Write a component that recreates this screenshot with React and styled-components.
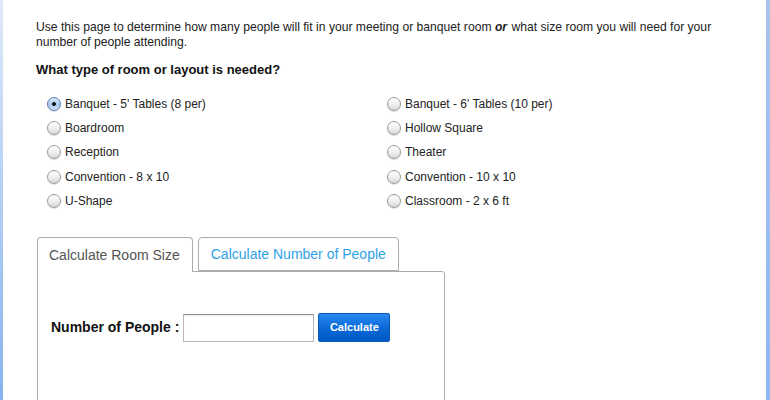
import React, { useState } from "react";
import styled, { createGlobalStyle } from "styled-components";

const Global = createGlobalStyle`
  html, body { margin: 0; padding: 0; background: #fff; }
  body { font-family: "Liberation Sans", Arial, Helvetica, sans-serif; color: #222; }
`;

const Frame = styled.div`
  display: flex;
  height: 400px;
  overflow: hidden;
`;

const Edge = styled.div`
  flex: 0 0 ${(p) => p.$w}px;
  background: linear-gradient(to bottom, ${(p) => p.$top}, ${(p) => p.$bottom});
`;

const Content = styled.div`
  flex: 1;
  padding: 20px 0 0 33px;
`;

const Intro = styled.p`
  margin: 0;
  width: 695px;
  font-size: 12.15px;
  line-height: 15px;
  color: #222;
  em { font-weight: bold; font-style: italic; padding-right: 1px; }
`;

const Heading = styled.h3`
  margin: 12px 0 0;
  font-size: 13px;
  line-height: 16px;
  font-weight: bold;
  color: #111;
`;

const Options = styled.div`
  display: grid;
  grid-template-columns: 340px 1fr;
  grid-auto-rows: 24.2px;
  margin: 14px 0 0 11px;
`;

const Option = styled.label`
  display: flex;
  align-items: center;
  gap: 4px;
  font-size: 12px;
  color: #222;
  cursor: pointer;
`;

const Radio = styled.input.attrs({ type: "radio" })`
  appearance: none;
  margin: 0;
  width: 14px;
  height: 14px;
  border-radius: 50%;
  border: 1px solid #9a9a9a;
  background: linear-gradient(to bottom, #ffffff 0%, #f0f0f0 50%, #d6d6d6 100%);
  box-shadow: 0 1px 1px rgba(0, 0, 0, 0.12);
  box-sizing: border-box;
  &:checked {
    border-color: #5a7fb0;
    background: radial-gradient(circle, #1a1a1a 0 1.6px, transparent 2.2px),
      linear-gradient(to bottom, #dbe9f8 0%, #a9c9ee 55%, #cfe3fa 100%);
  }
`;

const Tabs = styled.div`
  margin: 24px 0 0 1px;
  width: 408px;
`;

const TabRow = styled.div`
  display: flex;
  gap: 5px;
  align-items: flex-end;
  position: relative;
  z-index: 1;
`;

const Tab = styled.button`
  font-family: inherit;
  font-size: 14px;
  height: ${(p) => (p.$active ? 35 : 34)}px;
  padding: 0 12px 0 ${(p) => (p.$active ? 11 : 12)}px;
  margin-bottom: ${(p) => (p.$active ? -1 : 0)}px;
  border: 1px solid #acacac;
  border-bottom: ${(p) => (p.$active ? "none" : "1px solid #acacac")};
  border-radius: 4px 4px 0 0;
  background: #fff;
  color: ${(p) => (p.$active ? "#555" : "#2ea2e6")};
  cursor: pointer;
  display: flex;
  align-items: center;
`;

const Panel = styled.div`
  border: 1px solid #acacac;
  border-radius: 0 3px 0 0;
  height: 200px;
  padding: 41px 13px 0;
  box-sizing: border-box;
  display: flex;
  align-items: flex-start;
`;

const FormRow = styled.div`
  display: flex;
  align-items: center;
`;

const FieldLabel = styled.span`
  font-size: 14px;
  font-weight: bold;
  color: #111;
  margin-right: 4px;
`;

const TextInput = styled.input`
  width: 131px;
  height: 28px;
  box-sizing: border-box;
  border: 1px solid #b5b5b5;
  border-top-color: #8e8e8e;
  box-shadow: inset 0 1px 1px rgba(0, 0, 0, 0.08);
  margin: 1px 4px 0 0;
  padding: 2px 4px;
  font-family: inherit;
  font-size: 12px;
`;

const Button = styled.button`
  width: 72px;
  height: 29px;
  border: 1px solid #0a5bb8;
  border-radius: 2px;
  background: linear-gradient(to bottom, #2a8af0 0%, #0b6ad8 50%, #0058c4 100%);
  color: #fff;
  font-family: inherit;
  font-weight: bold;
  font-size: 11px;
  cursor: pointer;
`;

const left = [
  "Banquet - 5' Tables (8 per)",
  "Boardroom",
  "Reception",
  "Convention - 8 x 10",
  "U-Shape",
];
const right = [
  "Banquet - 6' Tables (10 per)",
  "Hollow Square",
  "Theater",
  "Convention - 10 x 10",
  "Classroom - 2 x 6 ft",
];

export default function App() {
  const [choice, setChoice] = useState(left[0]);
  const [tab, setTab] = useState(0);
  const items = [];
  left.forEach((l, i) => {
    items.push(l, right[i]);
  });
  return (
    <>
      <Global />
      <Frame>
        <Edge $w={3} $top="#dfe9f8" $bottom="#86b3ee" />
        <Content>
          <Intro>
            Use this page to determine how many people will fit in your meeting or banquet room{" "}
            <em>or</em> what size room you will need for your number of people attending.
          </Intro>
          <Heading>What type of room or layout is needed?</Heading>
          <Options>
            {items.map((label) => (
              <Option key={label}>
                <Radio
                  name="layout"
                  checked={choice === label}
                  onChange={() => setChoice(label)}
                />
                {label}
              </Option>
            ))}
          </Options>
          <Tabs>
            <TabRow>
              <Tab $active={tab === 0} onClick={() => setTab(0)}>
                Calculate Room Size
              </Tab>
              <Tab $active={tab === 1} onClick={() => setTab(1)}>
                Calculate Number of People
              </Tab>
            </TabRow>
            <Panel>
              <FormRow>
                <FieldLabel>Number of People :</FieldLabel>
                <TextInput />
                <Button>Calculate</Button>
              </FormRow>
            </Panel>
          </Tabs>
        </Content>
        <Edge $w={4} $top="#a9c4ec" $bottom="#8fb8f0" />
      </Frame>
    </>
  );
}
